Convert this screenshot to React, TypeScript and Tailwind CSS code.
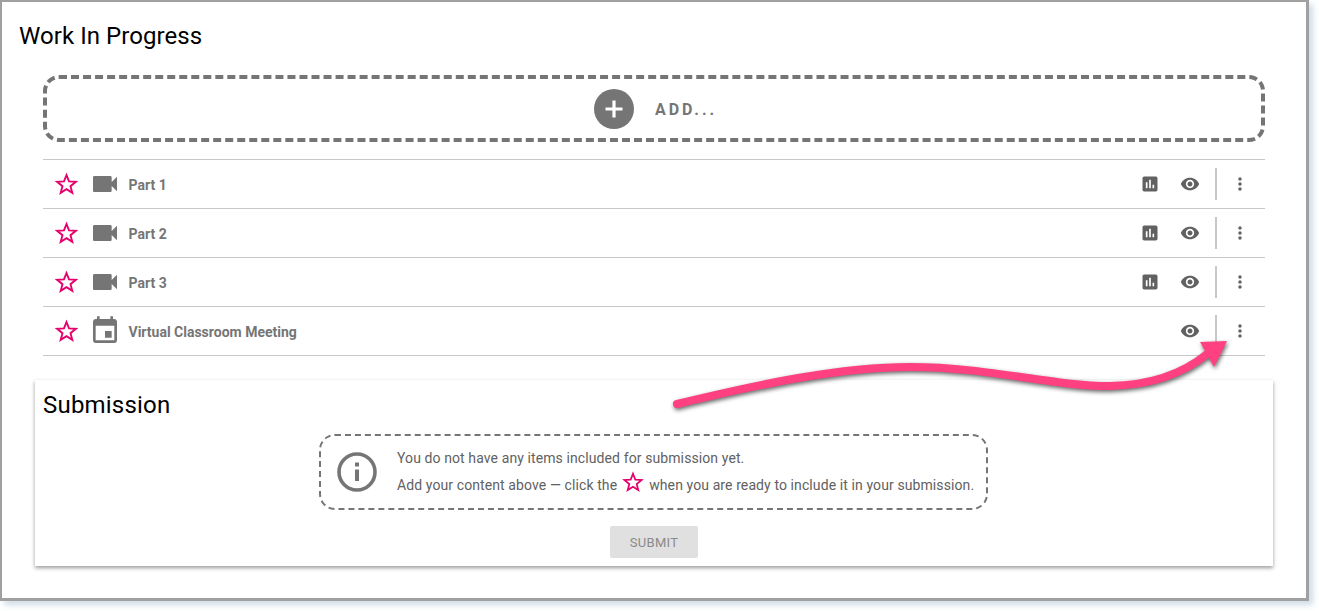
import React from "react";

const ROBOTO = "font-['Roboto',sans-serif]";

const paths = {
    videocam: "M17 10.5V7c0-.55-.45-1-1-1H4c-.55 0-1 .45-1 1v10c0 .55.45 1 1 1h12c.55 0 1-.45 1-1v-3.5l4 4v-11l-4 4z",
    event: "M17 12h-5v5h5v-5zM16 1v2H8V1H6v2H5c-1.11 0-1.99.9-1.99 2L3 19c0 1.1.89 2 2 2h14c1.1 0 2-.9 2-2V5c0-1.1-.9-2-2-2h-1V1h-2zm3 18H5V8h14v11z",
    assessment: "M19 3H5c-1.1 0-2 .9-2 2v14c0 1.1.9 2 2 2h14c1.1 0 2-.9 2-2V5c0-1.1-.9-2-2-2zM9 17H7v-7h2v7zm4 0h-2V7h2v10zm4 0h-2v-4h2v4z",
    eye: "M12 4.5C7 4.5 2.73 7.61 1 12c1.73 4.39 6 7.5 11 7.5s9.27-3.11 11-7.5c-1.73-4.39-6-7.5-11-7.5zM12 17c-2.76 0-5-2.24-5-5s2.24-5 5-5 5 2.24 5 5-2.24 5-5 5zm0-8c-1.66 0-3 1.34-3 3s1.34 3 3 3 3-1.34 3-3-1.34-3-3-3z",
    more: "M12 8c1.1 0 2-.9 2-2s-.9-2-2-2-2 .9-2 2 .9 2 2 2zm0 2c-1.1 0-2 .9-2 2s.9 2 2 2 2-.9 2-2-.9-2-2-2zm0 6c-1.1 0-2 .9-2 2s.9 2 2 2 2-.9 2-2-.9-2-2-2z",
};

function Icon({ d, className }: { d: string; className: string }) {
    return (
        <svg viewBox="0 0 24 24" fill="currentColor" className={className}>
            <path d={d} />
        </svg>
    );
}

function Star({ className }: { className: string }) {
    return (
        <svg viewBox="0 0 24 24" fill="none" stroke="#e5006d" strokeWidth="1.9" className={className}>
            <polygon points="12,3 14.5,9.4 21.4,9.8 16,14.2 17.8,20.8 12,17.1 6.2,20.8 8,14.2 2.6,9.8 9.5,9.4" />
        </svg>
    );
}

function Row({ label, icon, stats }: { label: string; icon: string; stats: boolean }) {
    return (
        <div className="flex h-[49px] items-center border-b border-[#c8c8c8] pl-[12px]">
            <Star className="h-[24px] w-[24px] -translate-x-[0.5px]" />
            <Icon d={icon} className="ml-[9.5px] h-[32px] w-[32px] text-[#757575]" />
            <span className="mt-[2px] ml-[8px] text-[14px] font-bold text-[#757575]">{label}</span>
            <div className="ml-auto flex items-center text-[#616161]">
                {stats && <Icon d={paths.assessment} className="h-[20px] w-[20px]" />}
                <Icon d={paths.eye} className="ml-[20px] h-[20px] w-[20px]" />
                <div className="ml-[15px] h-[32px] w-[2px] bg-[#c8c8c8]" />
                <Icon d={paths.more} className="mr-[15px] ml-[13px] h-[20px] w-[20px]" />
            </div>
        </div>
    );
}

export default function App() {
    return (
        <div className={`${ROBOTO} relative h-[611px] w-[1319px] overflow-hidden bg-white`}>
            <div className="h-[601px] w-[1309px] border-t-2 border-r-3 border-b-3 border-l-2 border-[#a0a0a0] bg-white pt-[18px] shadow-[4px_4px_6px_rgba(150,180,200,0.45)]">
                <h1 className="ml-[17px] text-[24px] leading-[32px] tracking-[0.06px] text-black">Work In Progress</h1>

                <div className="mx-[41px] mt-[23px] w-[1222px]">
                    <div className="flex h-[67px] items-center justify-center rounded-[16px] border-4 border-dashed border-[#757575] pl-[3px]">
                        <div className="flex h-[40px] w-[40px] items-center justify-center rounded-full bg-[#757575]">
                            <svg viewBox="0 0 24 24" className="h-[24px] w-[24px]" fill="none" stroke="white" strokeWidth="3.2">
                                <path d="M12 3.5v17M3.5 12h17" />
                            </svg>
                        </div>
                        <span className="mt-[3px] ml-[21px] text-[16px] font-bold tracking-[2.9px] text-[#757575]">ADD...</span>
                    </div>

                    <div className="mt-[17px] border-t border-[#c8c8c8]">
                        <Row label="Part 1" icon={paths.videocam} stats />
                        <Row label="Part 2" icon={paths.videocam} stats />
                        <Row label="Part 3" icon={paths.videocam} stats />
                        <Row label="Virtual Classroom Meeting" icon={paths.event} stats={false} />
                    </div>
                </div>

                <div className="mt-[24px] ml-[33px] h-[186px] w-[1238px] bg-white pt-[9px] shadow-[0_2px_4px_rgba(0,0,0,0.4)]">
                    <h2 className="ml-[8px] text-[24px] leading-[32px] tracking-[0.2px] text-black">Submission</h2>
                    <div className="mt-[13px] ml-[284px] flex h-[76px] w-[669px] items-center rounded-[16px] border-2 border-dashed border-[#757575] pl-[16px]">
                        <svg viewBox="0 0 40 40" className="h-[40px] w-[40px] text-[#757575]" fill="none" stroke="currentColor">
                            <circle cx="20" cy="20" r="18" strokeWidth="3.6" />
                            <path d="M20 17.5v11.5" strokeWidth="4" />
                            <path d="M20 10.5v4" strokeWidth="4" />
                        </svg>
                        <div className="mb-[1px] ml-[20px] text-[14px] leading-[26px] tracking-[0.1px] text-[#616161]">
                            <div>You do not have any items included for submission yet.</div>
                            <div className="flex items-center">
                                Add your content above — click the
                                <Star className="mx-[5px] mb-[6px] h-[22px] w-[22px]" />
                                when you are ready to include it in your submission.
                            </div>
                        </div>
                    </div>
                    <button className="mx-auto mt-[16px] block h-[32px] w-[88px] rounded-[2px] bg-[#e0e0e0] pt-[2px] text-[13px] tracking-[0.3px] text-[#8a8a8a]">
                        SUBMIT
                    </button>
                </div>
            </div>

            <svg viewBox="0 0 1319 611" className="absolute top-0 left-0 h-[611px] w-[1319px] drop-shadow-[1px_2px_2px_rgba(0,0,0,0.6)]">
                <path
                    d="M677 404 C760 384 840 367 910 367 C990 367 1050 386 1110 386 C1155 385 1185 372 1207 354"
                    fill="none"
                    stroke="#ff4081"
                    strokeWidth="8"
                    strokeLinecap="round"
                />
                <polygon points="1200,342 1227,341 1214,367" fill="#ff4081" />
            </svg>
        </div>
    );
}
